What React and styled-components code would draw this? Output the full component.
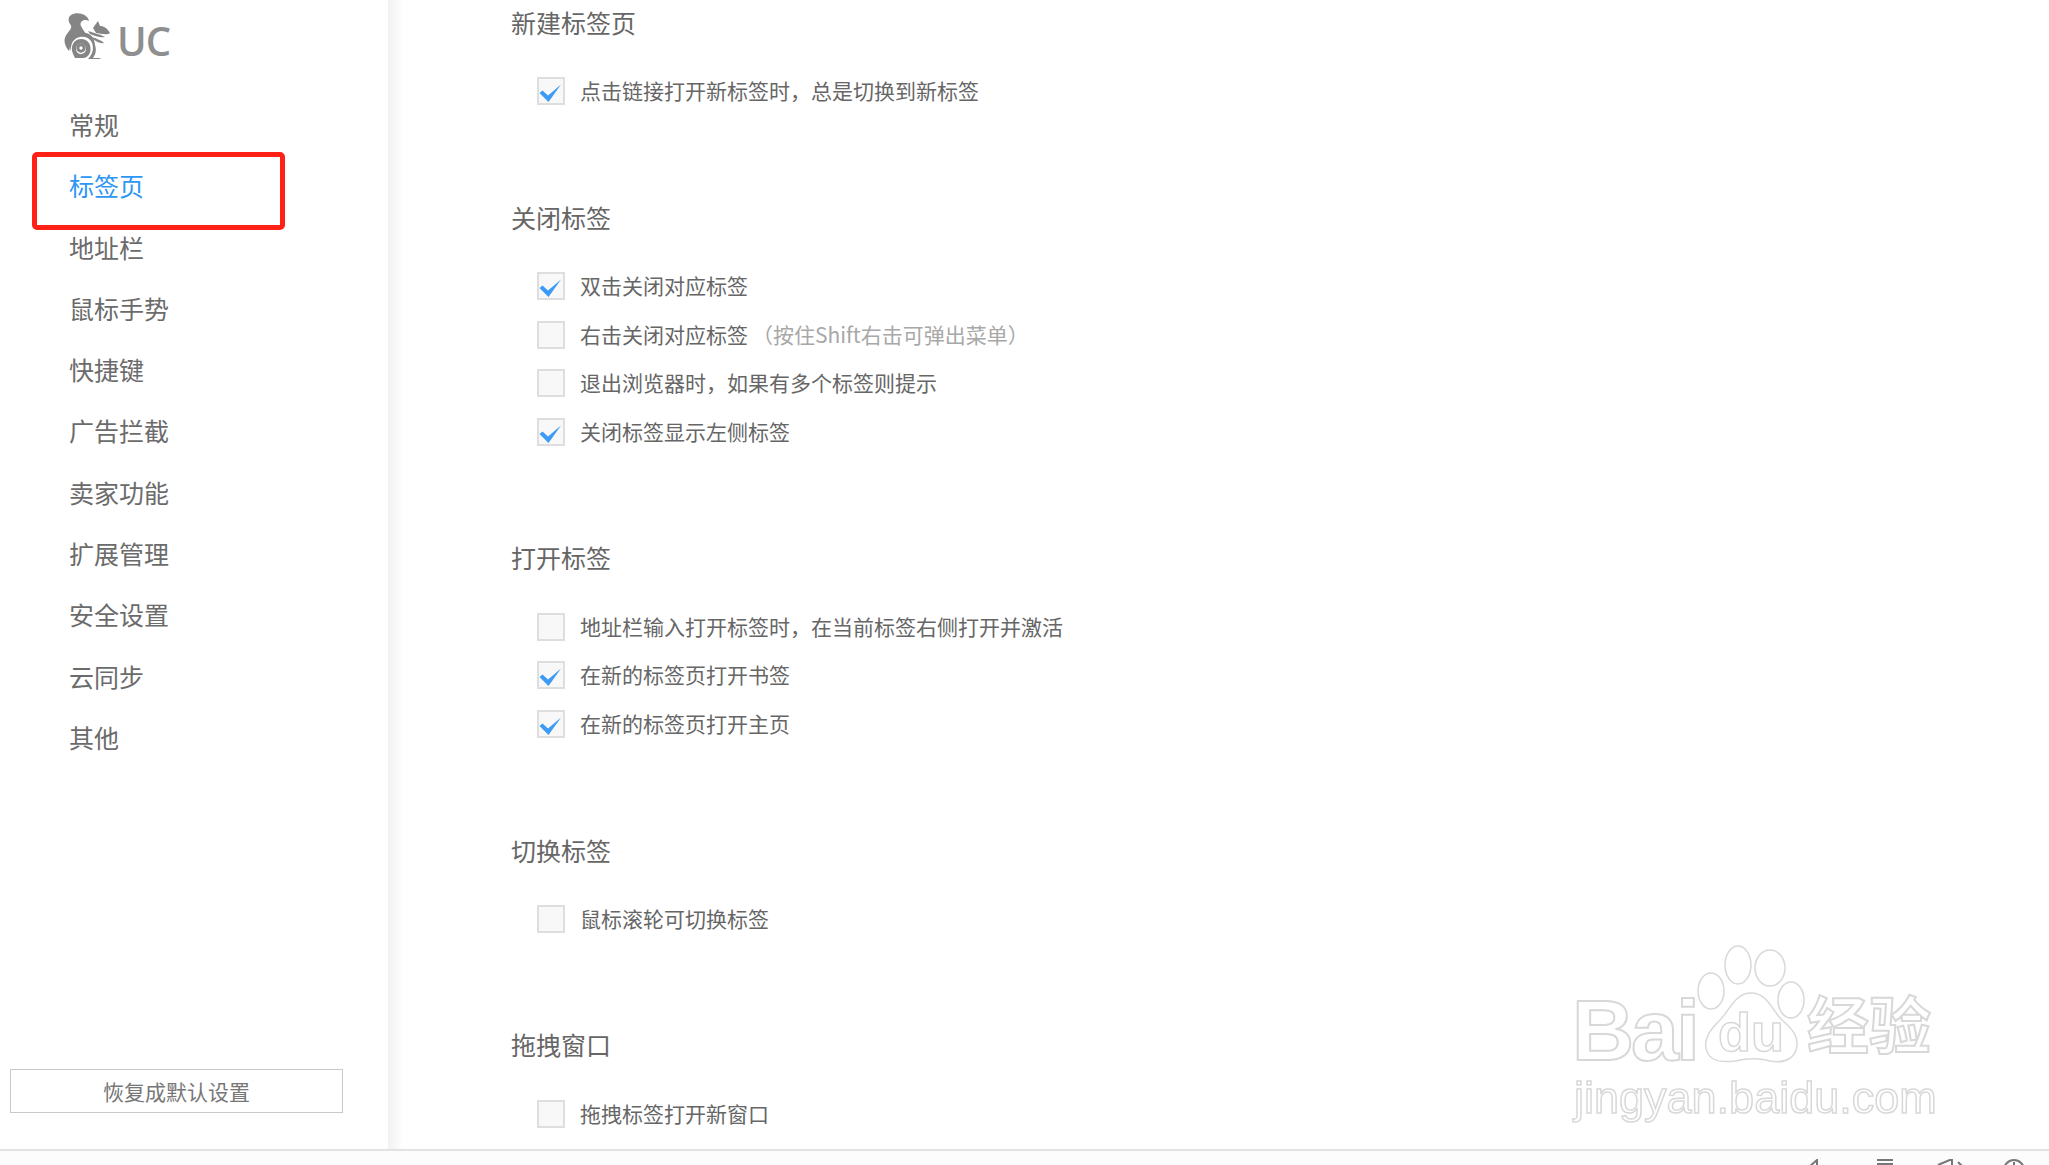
import React from 'react';
import styled, { createGlobalStyle } from 'styled-components';

const sections = [
  { title: '新建标签页', rows: [{ label: '点击链接打开新标签时，总是切换到新标签', checked: true }] },
  {
    title: '关闭标签',
    rows: [
      { label: '双击关闭对应标签', checked: true },
      { label: '右击关闭对应标签', hint: '（按住Shift右击可弹出菜单）' },
      { label: '退出浏览器时，如果有多个标签则提示' },
      { label: '关闭标签显示左侧标签', checked: true }
    ]
  },
  {
    title: '打开标签',
    rows: [
      { label: '地址栏输入打开标签时，在当前标签右侧打开并激活' },
      { label: '在新的标签页打开书签', checked: true },
      { label: '在新的标签页打开主页', checked: true }
    ]
  },
  { title: '切换标签', rows: [{ label: '鼠标滚轮可切换标签' }] },
  { title: '拖拽窗口', rows: [{ label: '拖拽标签打开新窗口' }] }
];

const navItems = ['常规', '标签页', '地址栏', '鼠标手势', '快捷键', '广告拦截', '卖家功能', '扩展管理', '安全设置', '云同步', '其他'];

const GlobalStyle = createGlobalStyle`
  html, body {
    margin: 0;
    padding: 0;
    background: #fff;
  }
  body {
    font-family: "Noto Sans CJK SC", "Noto Sans", sans-serif;
    color: #666;
  }
`;

const Page = styled.div`
  position: relative;
  display: flex;
  flex-direction: column;
  width: 2049px;
  height: 1165px;
  overflow: hidden;
`;

const Body = styled.div`
  display: flex;
  height: 1149px;
  flex: none;
`;

const Sidebar = styled.aside`
  display: flex;
  flex-direction: column;
  width: 388px;
  flex: none;
`;

const Logo = styled.div`
  display: flex;
  align-items: center;
  gap: 7px;
  height: 46px;
  margin: 13px 0 36px 64px;
`;

const LogoText = styled.span`
  font-family: "Open Sans", sans-serif;
  font-size: 40px;
  font-weight: 600;
  line-height: 46px;
  letter-spacing: -1px;
  color: #8f8f8f;
  margin-top: 10px;
`;

const Nav = styled.nav`
  display: flex;
  flex-direction: column;
`;

const NavItem = styled.div`
  position: relative;
  height: 61.3px;
  line-height: 59px;
  padding-left: 69px;
  font-size: 25px;
  color: ${({ $active }) => ($active ? '#2e96f5' : '#6b6b6b')};

  ${({ $active }) =>
    $active &&
    `
    &::after {
      content: '';
      position: absolute;
      left: 32px;
      top: -4px;
      width: 243px;
      height: 68px;
      border: 5px solid #ff2116;
      border-radius: 5px;
    }
  `}
`;

const ResetButton = styled.button`
  width: 333px;
  height: 44px;
  margin: auto 0 36px 10px;
  padding: 0;
  background: #fff;
  border: 1px solid #c9c9c9;
  font-family: inherit;
  font-size: 21px;
  color: #777;
`;

const Main = styled.main`
  flex: 1;
  padding: 8px 0 0 123px;
  background: linear-gradient(to right, #f1f1f1 0, #fff 15px);
  overflow: hidden;
`;

const Section = styled.section`
  margin-bottom: 88px;
`;

const Heading = styled.h2`
  margin: 0 0 29px;
  font-size: 25px;
  font-weight: 400;
  line-height: 29px;
  color: #666;
`;

const Row = styled.div`
  display: flex;
  align-items: center;
  gap: 15px;
  height: 48.7px;
  padding-left: 26px;
  font-size: 21px;
  color: #666;
`;

const Box = styled.span`
  display: flex;
  box-sizing: border-box;
  width: 28px;
  height: 28px;
  flex: none;
  margin-top: 2px;
  background: #f8f8f8;
  border: 2px solid #dedede;
`;

const Hint = styled.span`
  color: #a8a8a8;
  margin-left: 4px;
`;

const StatusBar = styled.footer`
  display: flex;
  justify-content: flex-end;
  box-sizing: border-box;
  height: 16px;
  flex: none;
  padding: 8px 24px 0 0;
  background: #fcfcfc;
  border-top: 2px solid #e2e2e2;
  overflow: hidden;
`;

const StatusIcon = styled.svg`
  flex: none;
  width: ${({ $w }) => $w}px;
  height: 22px;
  margin-left: ${({ $gap }) => $gap}px;
  fill: none;
  stroke: #777;
  stroke-width: 2;
`;

const Watermark = styled.div`
  position: absolute;
  left: 1570px;
  top: 945px;
  width: 380px;
  height: 180px;
  filter: blur(0.6px);
`;

const PawSvg = styled.svg`
  position: absolute;
  left: 0;
  top: 0;
  width: 380px;
  height: 180px;
  fill: #fff;
  stroke: #d8d8d8;
  stroke-width: 1.5;
`;

const MarkText = styled.span`
  position: absolute;
  left: ${({ $x }) => $x}px;
  top: ${({ $y }) => $y}px;
  font-family: ${({ $cjk }) => ($cjk ? '"Noto Sans CJK SC"' : '"Liberation Sans"')}, sans-serif;
  font-size: ${({ $size }) => $size}px;
  font-weight: ${({ $weight }) => $weight || 400};
  letter-spacing: ${({ $track }) => $track || 0}px;
  line-height: 1;
  white-space: nowrap;
  color: #fff;
  -webkit-text-stroke: ${({ $stroke }) => $stroke || 1.5}px #d8d8d8;
`;

const CheckMark = () => (
  <svg width="24" height="24" viewBox="0 0 24 24">
    <path d="M0.5 14 L3.5 11.5 L9 16.5 L22 5.5 L9.5 23 Z" fill="#3d9bf5" />
  </svg>
);

const Squirrel = () => (
  <svg width="46" height="46" viewBox="0 0 46 46" fill="#858585">
    <path d="M7 2 C13 -2 24 1 25 8 C20 5 15 9 17 13 C18 16 21 18 22 22 C12 21 7 27 5 38 C0 32 -1 26 3 21 C6 16 9 15 6 11 C4 8 4 4 7 2 Z" />
    <circle cx="17" cy="35" r="3.2" fill="none" stroke="#858585" strokeWidth="3" />
    <path d="M8 38 C7 30 12 26 17 26 C23 26 27 30 26.5 37 C26 41 24 44 20 45 L11 45 C10 43 9 41 8 38 Z M12 36 C12 39 14.5 41 17 41 C20 41 22 38.5 22 36 C22 33 20 30.5 17 30.5 C14 30.5 12 33 12 36 Z" fillRule="evenodd" />
    <path d="M6 38 C4 28 13 19 22 20 C27 21 30 24 31 32 C33 38 31 42 29 45 L35 45 C37 46 38 46 38 46 L24 46 C30 40 30 33 27 28 C23 22 12 22 8 30 C7 33 7 35 6 38 Z" />
    <path d="M24 18 C29 20 36 21 41 24 C37 25 31 23 26 21 Z" />
    <path d="M28 24 C33 26 37 27 40 30 C36 31 32 28 30 27 Z" />
    <path d="M29 15 L34 8 L36 13 C40 13 43 15 46 20 C42 23 36 20 32 20 C31 18 30 17 29 15 Z" />
  </svg>
);

const Paw = () => (
  <PawSvg viewBox="0 0 380 180">
    <ellipse cx="168" cy="20" rx="13" ry="19" />
    <ellipse cx="200" cy="23" rx="15" ry="18" />
    <ellipse cx="141" cy="46" rx="13" ry="18" />
    <ellipse cx="221" cy="55" rx="13" ry="18" />
    <path d="M181 48 C165 48 160 65 150 75 C140 85 134 93 136 103 C138 115 150 118 165 116 C178 113 190 113 200 116 C215 119 226 113 227 100 C228 90 220 82 212 75 C203 67 198 48 181 48 Z" />
  </PawSvg>
);

const App = () => (
  <Page>
    <GlobalStyle />
    <Body>
      <Sidebar>
        <Logo>
          <Squirrel />
          <LogoText>UC</LogoText>
        </Logo>
        <Nav>
          {navItems.map(item => (
            <NavItem key={item} $active={item === '标签页'}>
              {item}
            </NavItem>
          ))}
        </Nav>
        <ResetButton>恢复成默认设置</ResetButton>
      </Sidebar>
      <Main>
        {sections.map(section => (
          <Section key={section.title}>
            <Heading>{section.title}</Heading>
            {section.rows.map(row => (
              <Row key={row.label}>
                <Box>{row.checked && <CheckMark />}</Box>
                <span>
                  {row.label}
                  {row.hint && <Hint>{row.hint}</Hint>}
                </span>
              </Row>
            ))}
          </Section>
        ))}
      </Main>
    </Body>
    <StatusBar>
      <StatusIcon $w={10} $gap={0} viewBox="0 0 10 22">
        <path d="M1 8 L9 1 L9 22" />
      </StatusIcon>
      <StatusIcon $w={16} $gap={59} viewBox="0 0 16 22">
        <path d="M0 1 H16 M0 5 H16" />
      </StatusIcon>
      <StatusIcon $w={30} $gap={44} viewBox="0 0 30 22">
        <path d="M1 6 L15 0 V22 M1 6 V22 M21 3 L25 7" />
      </StatusIcon>
      <StatusIcon $w={22} $gap={36} viewBox="0 0 22 22">
        <circle cx="11" cy="11" r="10" />
        <path d="M11 3 V6" />
      </StatusIcon>
    </StatusBar>
    <Watermark>
      <Paw />
      <MarkText $x={2} $y={42} $size={86} $weight={700} $track={-3} $stroke={2}>Bai</MarkText>
      <MarkText $x={148} $y={60} $size={54} $weight={700}>du</MarkText>
      <MarkText $cjk $x={237} $y={46} $size={62} $weight={700} $stroke={2}>经验</MarkText>
      <MarkText $x={4} $y={130} $size={45}>jingyan.baidu.com</MarkText>
    </Watermark>
  </Page>
);

export default App;
